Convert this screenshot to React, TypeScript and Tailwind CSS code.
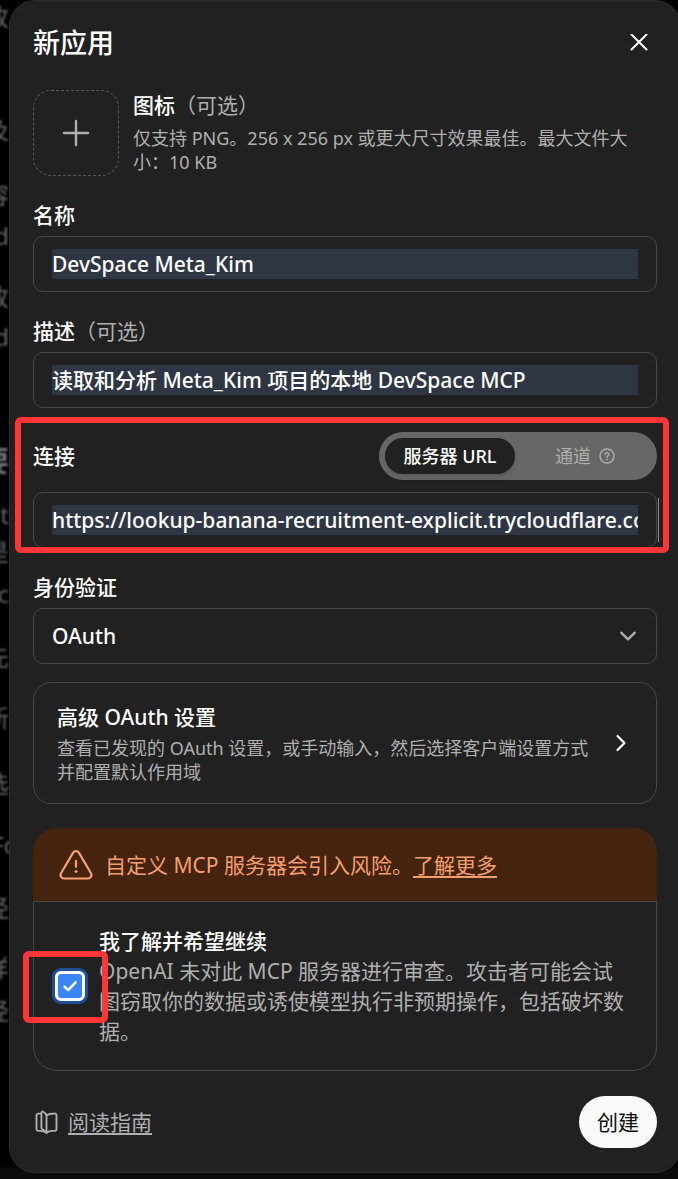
import { useState } from "react";
import type { ReactNode } from "react";

// Slivers of the conversation that stay visible beside the dialog
const backdropLines = [
  { text: "改", className: "mt-[5px]" },
  { text: "及", className: "mt-[89px]" },
  { text: "容", className: "mt-[41px]" },
  { text: "d", className: "mt-[17px]" },
  { text: "改", className: "mt-[37px]" },
  { text: "d", className: "mt-[16px]" },
  { text: "要", className: "mt-[100px] text-[28px] font-bold text-[#777]" },
  { text: "t", className: "mt-[30px]" },
  { text: "是", className: "mt-[13px]" },
  { text: "c", className: "mt-[18px]" },
  { text: "先", className: "mt-[39px]" },
  { text: "新", className: "mt-[37px]" },
  { text: "选", className: "mt-[42px]" },
  { text: "Fo", className: "mt-[37px] self-center" },
  { text: "经", className: "mt-[39px]" },
  { text: "样", className: "mt-[36px]" },
  { text: "经", className: "mt-[19px]" },
];

const inputClass =
  "block h-[30px] w-full min-w-0 bg-[#2f3643] p-0 text-[21px] leading-[30px] font-medium text-white focus:outline-none";

function Optional() {
  return <span className="font-normal text-[#afafaf]">（可选）</span>;
}

function Frame({ children }: { children: ReactNode }) {
  return (
    <div className="flex h-14 items-center rounded-[10px] border border-[#474747] px-[18px]">
      {children}
    </div>
  );
}

function Highlight({ className }: { className: string }) {
  return (
    <div
      aria-hidden="true"
      className={`pointer-events-none absolute z-10 rounded-[6px] border-6 border-[#ff3636] ${className}`}
    />
  );
}

export default function App() {
  const [name, setName] = useState("DevSpace Meta_Kim");
  const [description, setDescription] = useState("读取和分析 Meta_Kim 项目的本地 DevSpace MCP");
  const [url, setUrl] = useState("https://lookup-banana-recruitment-explicit.trycloudflare.com");
  const [mode, setMode] = useState<"server" | "tunnel">("server");
  const [accepted, setAccepted] = useState(true);

  return (
    <div className="flex min-h-screen items-start overflow-hidden bg-[linear-gradient(to_top,#0c0c0c_8px,#000_16px)] font-['Noto_Sans','Noto_Sans_CJK_SC',sans-serif] text-[21px] leading-[30px] text-white">
      {/* Backdrop */}
      <div
        aria-hidden="true"
        className="flex w-[9px] shrink-0 flex-col items-end overflow-hidden text-2xl text-[#666]"
      >
        {backdropLines.map((line, i) => (
          <span key={i} className={`h-6 leading-6 whitespace-nowrap blur-[1px] ${line.className}`}>
            {line.text}
          </span>
        ))}
      </div>

      {/* Dialog */}
      <form
        role="dialog"
        aria-labelledby="dialog-title"
        onSubmit={(e) => e.preventDefault()}
        className="-mr-[3px] min-w-0 flex-1 rounded-[26px] border border-[#2d2d2d] bg-[#212121] px-[23px] py-6"
      >
        <header className="flex items-center justify-between">
          <h2 id="dialog-title" className="text-[27px] leading-9 font-medium">
            新应用
          </h2>
          <button type="button" aria-label="关闭" className="flex size-9 items-center justify-center">
            <svg width="18" height="18" viewBox="0 0 18 18" fill="none" stroke="currentColor" strokeWidth="2" strokeLinecap="round">
              <path d="M1.5 .5l15 15M16.5 .5l-15 15" />
            </svg>
          </button>
        </header>

        {/* Icon */}
        <div className="mt-[29px] flex gap-3.5">
          <button
            type="button"
            aria-label="图标"
            className="flex size-[86px] shrink-0 items-center justify-center rounded-[18px] border border-dashed border-[#5a5a5a] text-[#afafaf]"
          >
            <svg width="28" height="28" viewBox="0 0 28 28" fill="none" stroke="currentColor" strokeWidth="2.4" strokeLinecap="round">
              <path d="M14 2v24M2 14h24" />
            </svg>
          </button>
          <div className="min-w-0">
            <div className="font-medium">
              图标<Optional />
            </div>
            <p className="mt-1.5 text-[18px] leading-6 text-[#afafaf]">
              仅支持 PNG。256 x 256 px 或更大尺寸效果最佳。最大文件大小：10 KB
            </p>
          </div>
        </div>

        {/* Name */}
        <div className="mt-6">
          <label htmlFor="app-name" className="mb-1.5 block font-medium">
            名称
          </label>
          <Frame>
            <input id="app-name" type="text" value={name} onChange={(e) => setName(e.target.value)} className={inputClass} />
          </Frame>
        </div>

        {/* Description */}
        <div className="mt-6">
          <label htmlFor="app-description" className="mb-1.5 block font-medium">
            描述<Optional />
          </label>
          <Frame>
            <input
              id="app-description"
              type="text"
              value={description}
              onChange={(e) => setDescription(e.target.value)}
              className={inputClass}
            />
          </Frame>
        </div>

        {/* Connection */}
        <div className="relative mt-6">
          <div className="mb-3 flex items-center justify-between">
            <label htmlFor="app-url" className="font-medium">
              连接
            </label>
            <div className="flex h-12 w-[278px] rounded-full bg-[#676767] p-1.5 text-[18px] leading-6">
              <button
                type="button"
                aria-pressed={mode === "server"}
                onClick={() => setMode("server")}
                className={`w-[130px] shrink-0 rounded-full ${mode === "server" ? "bg-[#212121] font-medium text-white shadow-md" : "text-[#afafaf]"}`}
              >
                服务器 URL
              </button>
              <button
                type="button"
                aria-pressed={mode === "tunnel"}
                onClick={() => setMode("tunnel")}
                className={`flex flex-1 items-center justify-center gap-2 rounded-full pl-1 ${mode === "tunnel" ? "bg-[#212121] font-medium text-white shadow-md" : "text-[#afafaf]"}`}
              >
                通道
                <svg width="16" height="16" viewBox="0 0 16 16" fill="none" stroke="currentColor" strokeWidth="1.4" strokeLinecap="round" strokeLinejoin="round">
                  <circle cx="8" cy="8" r="7" />
                  <path d="M6.3 6.4a1.75 1.75 0 1 1 2.6 1.5c-.6.3-.9.6-.9 1.1" />
                  <circle cx="8" cy="11.3" r=".5" fill="currentColor" strokeWidth=".8" />
                </svg>
              </button>
            </div>
          </div>
          <Frame>
            <input id="app-url" type="text" value={url} onChange={(e) => setUrl(e.target.value)} className={inputClass} />
          </Frame>
          <span aria-hidden="true" className="absolute -right-0.5 bottom-1.5 h-11 w-px bg-[#8a8a8a]" />
          <Highlight className="-top-[15px] -right-3 -bottom-[5px] -left-[18px]" />
        </div>

        {/* Authentication */}
        <div className="mt-6">
          <label htmlFor="app-auth" className="mb-1.5 block font-medium">
            身份验证
          </label>
          <div className="relative">
            <select
              id="app-auth"
              defaultValue="oauth"
              className="block h-14 w-full appearance-none rounded-[10px] border border-[#474747] bg-[#212121] px-[18px] text-[21px] font-medium text-white"
            >
              <option value="oauth">OAuth</option>
            </select>
            <svg
              className="pointer-events-none absolute top-1/2 right-5 -translate-y-1/2 text-[#afafaf]"
              width="18"
              height="18"
              viewBox="0 0 18 18"
              fill="none"
              stroke="currentColor"
              strokeWidth="2.2"
              strokeLinecap="round"
              strokeLinejoin="round"
            >
              <path d="M2.2 5.6L9 12.4l6.8-6.8" />
            </svg>
          </div>
        </div>

        {/* Advanced settings */}
        <button
          type="button"
          className="mt-[18px] flex w-full items-center gap-3 rounded-[18px] border border-[#474747] px-[23px] py-[19px] text-left"
        >
          <span className="min-w-0 flex-1">
            <span className="block font-medium">高级 OAuth 设置</span>
            <span className="mt-1 block text-[18px] leading-6 text-[#afafaf]">
              查看已发现的 OAuth 设置，或手动输入，然后选择客户端设置方式并配置默认作用域
            </span>
          </span>
          <svg className="shrink-0" width="24" height="24" viewBox="0 0 24 24" fill="none" stroke="currentColor" strokeWidth="2.2" strokeLinecap="round" strokeLinejoin="round">
            <path d="M8.5 5l7 7-7 7" />
          </svg>
        </button>

        {/* Risk notice */}
        <section className="mt-6">
          <div className="flex h-[73px] items-center gap-3 rounded-t-3xl bg-[#44240f] px-[26px] text-[#f79f70]">
            <svg className="shrink-0" width="34" height="30" viewBox="0 0 34 30" fill="none" stroke="currentColor" strokeWidth="2.2" strokeLinecap="round" strokeLinejoin="round">
              <path d="M14 2.9a3.5 3.5 0 0 1 6 0l12 20.4c1.3 2.4-.3 5.2-3 5.2H5c-2.7 0-4.3-2.8-3-5.2z" />
              <path d="M17 10.8v6" />
              <circle cx="17" cy="21.5" r="1" fill="currentColor" strokeWidth="1" />
            </svg>
            <p>
              自定义 MCP 服务器会引入风险。
              <a href="#risks" className="underline underline-offset-3">
                了解更多
              </a>
            </p>
          </div>
          <div className="flex items-center gap-3.5 rounded-b-3xl border border-[#474747] pt-6 pr-6 pb-6 pl-[21px]">
            <div className="relative flex shrink-0">
              <input
                id="app-accept"
                type="checkbox"
                checked={accepted}
                onChange={(e) => setAccepted(e.target.checked)}
                className="size-[30px] appearance-none rounded-[6px] border-3 border-white ring-3 ring-[#1d4f97] checked:bg-[#3b85fb]"
              />
              {accepted && (
                <svg className="pointer-events-none absolute inset-0" width="30" height="30" viewBox="0 0 30 30" fill="none" stroke="#fff" strokeWidth="2.6" strokeLinecap="round" strokeLinejoin="round">
                  <path d="M9.5 15.6l3.7 3.5 7.3-7.7" />
                </svg>
              )}
              <Highlight className="-top-5 -right-[23px] -bottom-[22px] -left-8" />
            </div>
            <div className="min-w-0">
              <label htmlFor="app-accept" className="block font-medium">
                我了解并希望继续
              </label>
              <p className="text-[#afafaf]">
                OpenAI 未对此 MCP 服务器进行审查。攻击者可能会试图窃取你的数据或诱使模型执行非预期操作，包括破坏数据。
              </p>
            </div>
          </div>
        </section>

        {/* Footer */}
        <footer className="mt-[25px] flex items-center justify-between">
          <a href="#guide" className="flex items-center gap-2.5 pl-0.5 text-[#afafaf]">
            <svg width="23" height="24" viewBox="0 0 23 24" fill="none" stroke="currentColor" strokeWidth="1.9" strokeLinecap="round" strokeLinejoin="round">
              <path d="M11.5 22.8c-1.8-1.3-4-1.9-6.7-1.9H3.3c-1 0-1.8-.8-1.8-1.800V5.4c0-1 .8-1.8 1.8-1.8h3" />
              <path d="M11.5 22.8c1.5-1.300 3.400-1.900 5.700-1.900h2.500c1 0 1.800-.8 1.800-1.800V5.200c0-1.100-.8-1.800-1.800-1.700-3.400 0-6.200.4-8.200 2" />
              <path d="M11.5 22.8l-4.100-3.500c-.6-.5-1-1.200-1-2V3c0-1.200 1-1.900 2-1.200 1.900 1.200 3.100 2.500 3.100 4.200z" />
            </svg>
            <span className="underline underline-offset-3">阅读指南</span>
          </a>
          <button type="submit" className="h-[52px] rounded-full bg-[#f9f9f9] px-[18px] text-[#0d0d0d]">
            创建
          </button>
        </footer>
      </form>
    </div>
  );
}
